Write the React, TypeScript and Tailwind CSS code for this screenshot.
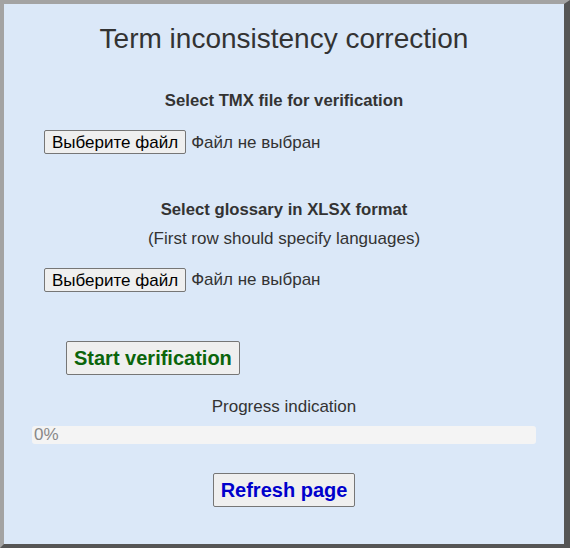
import React from 'react';

function FileRow() {
  return (
    <div className="flex items-center pl-[40px] gap-[5px]">
      <button className="h-[24px] px-[7px] bg-[#efefef] border border-[#767676] rounded-[2px] text-[17px] leading-none text-black">
        Выберите файл
      </button>
      <span className="text-[17px] text-[#333]">Файл не выбран</span>
    </div>
  );
}

export default function App() {
  const progress = 0;
  return (
    <div className="h-[548px] w-[570px] bg-[#dbe8f8] border-t-4 border-l-4 border-r-[6px] border-b-4 border-t-[#a3a3a3] border-l-[#a3a3a3] border-r-[#555] border-b-[#555] font-['Liberation_Sans',Arial,sans-serif] text-[#333] leading-[1.15]">
      <div className="flex flex-col">
        <h1 className="mt-[19px] text-center text-[28px]">Term inconsistency correction</h1>

        <p className="mt-[36px] text-center text-[16.7px] font-bold">Select TMX file for verification</p>
        <div className="mt-[20px]">
          <FileRow />
        </div>

        <p className="mt-[46px] text-center text-[16.7px] font-bold">Select glossary in XLSX format</p>
        <p className="mt-[9px] text-center text-[17px]">(First row should specify languages)</p>
        <div className="mt-[20px]">
          <FileRow />
        </div>

        <div className="mt-[49px] pl-[62px]">
          <button className="h-[34px] px-[7px] bg-[#efefef] border border-[#767676] rounded-[2px] text-[20px] font-bold text-[#0b650b] leading-none">
            Start verification
          </button>
        </div>

        <p className="mt-[22px] text-center text-[17px]">Progress indication</p>
        <div className="mt-[9px] mx-[28px] h-[18px] rounded-[3px] bg-[#f4f4f4] relative">
          <div className="h-full rounded-[3px] bg-[#4caf50]" style={{ width: `${progress}%` }} />
          <span className="absolute left-[2px] top-1/2 -translate-y-1/2 text-[17px] text-[#888]">{progress}%</span>
        </div>

        <div className="mt-[29px] flex justify-center">
          <button className="h-[34px] px-[7px] bg-[#efefef] border border-[#767676] rounded-[2px] text-[20px] font-bold text-[#0000cc] leading-none">
            Refresh page
          </button>
        </div>
      </div>
    </div>
  );
}
